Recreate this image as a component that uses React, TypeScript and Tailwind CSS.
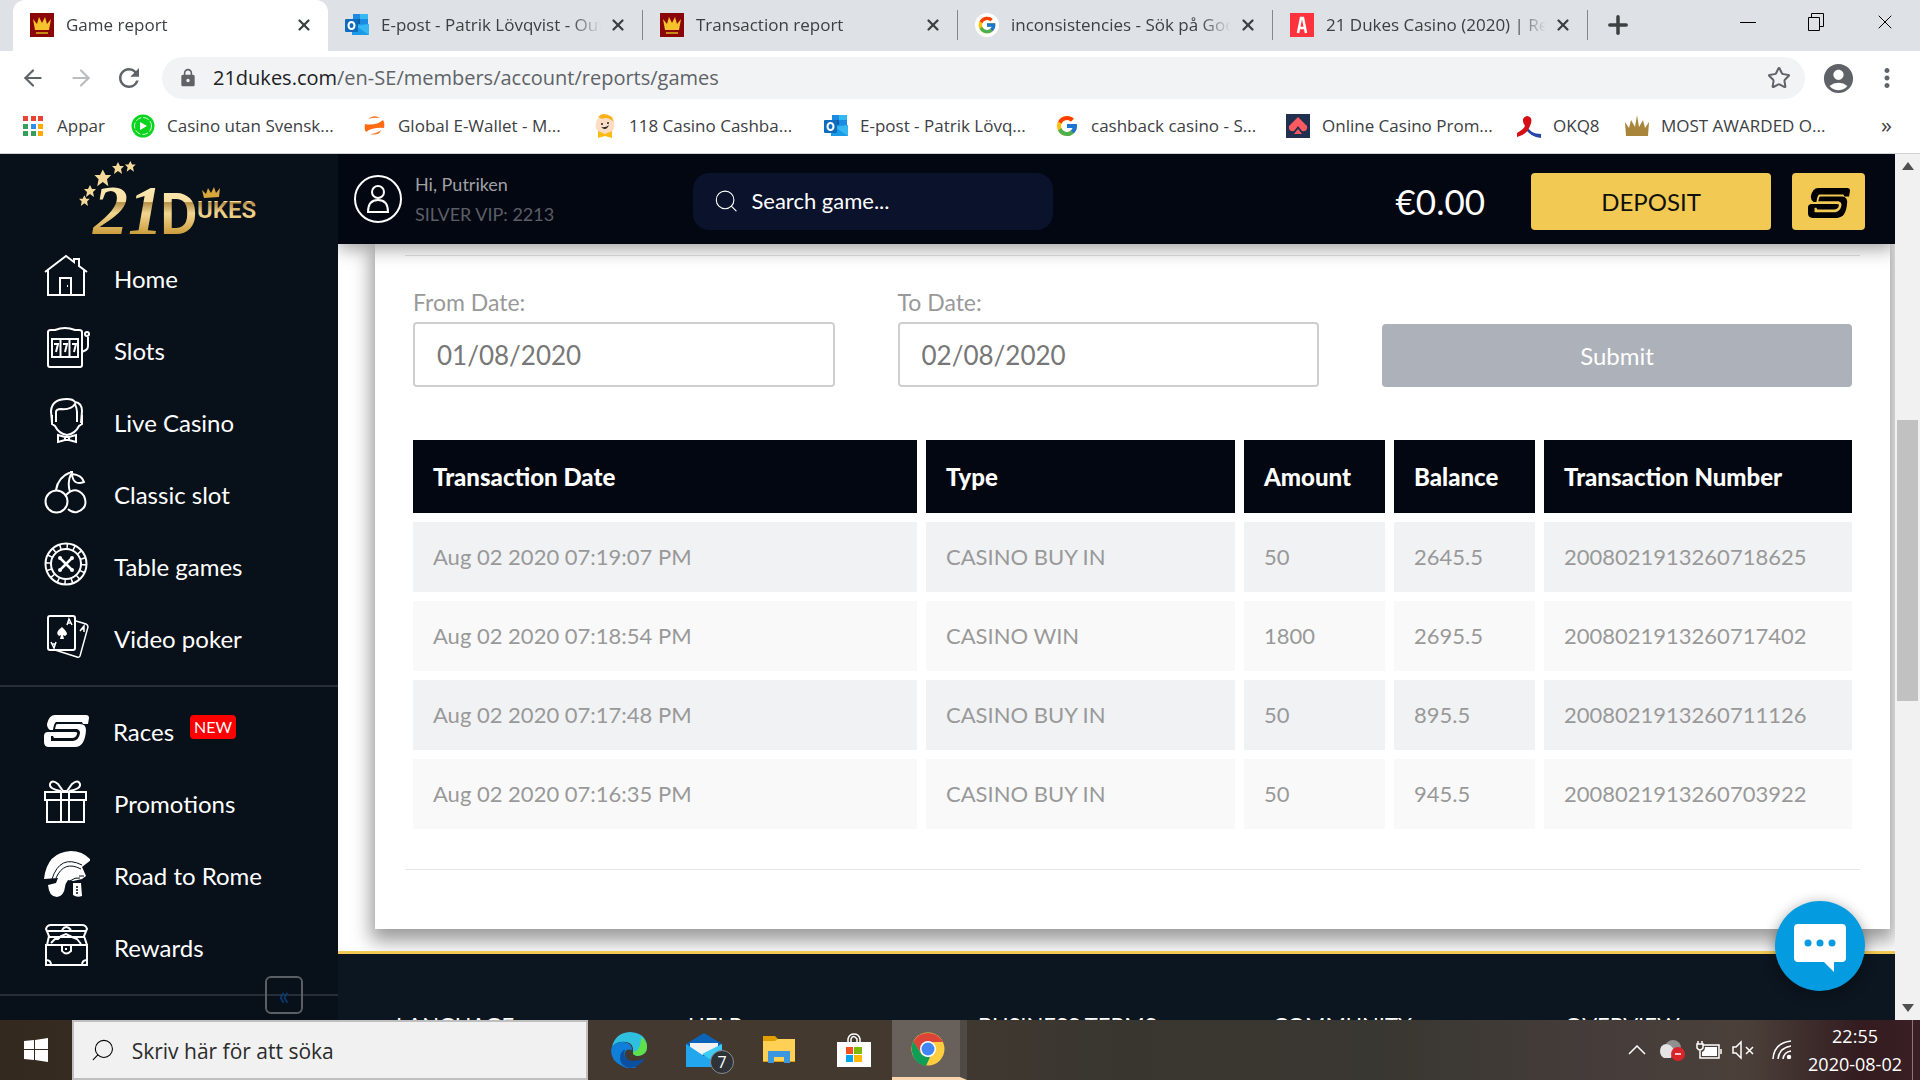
import { useState } from 'react';
import type { ReactNode } from 'react';
import { ArrowLeft, ArrowRight, Star, X, Plus, Search } from 'lucide-react';
import { FcGoogle } from 'react-icons/fc';
import { MdAccountCircle, MdLock, MdRefresh, MdMoreVert } from 'react-icons/md';

const CrownFavicon = () => (
    <svg viewBox="0 0 24 24" className="size-6 shrink-0" aria-hidden="true">
        <rect width="24" height="24" fill="#8b0606" />
        <path d="M3 6l4 5 2-7 3 6 3-6 2 7 4-5-2 11H5z" fill="#f6c32c" />
        <path d="M6 19h12v2H6z" fill="#c98a12" />
    </svg>
);

const OutlookIcon = () => (
    <svg viewBox="0 0 24 24" className="size-6 shrink-0" aria-hidden="true">
        <path d="M8 1h15v10H8z" fill="#1a8be0" />
        <path d="M15 1h8v5h-8z" fill="#35b8f1" />
        <path d="M8 6h7v5H8z" fill="#0a5eb0" />
        <path d="M7 11h17v11H7z" fill="#1a9be8" />
        <path d="M24 11v11L11 13z" fill="#35b8f1" />
        <rect y="6" width="13" height="13" rx="1" fill="#0f6cbd" />
        <ellipse cx="6.500" cy="12.500" rx="3" ry="3.500" fill="none" stroke="#fff" strokeWidth="2" />
    </svg>
);

const GoogleIcon = () => <FcGoogle className="size-6 shrink-0" aria-hidden="true" />;

const GoogleTabIcon = () => (
    <span className="flex size-6 shrink-0 items-center justify-center rounded-full bg-white">
        <FcGoogle className="size-5" aria-hidden="true" />
    </span>
);

const AskIcon = () => (
    <svg viewBox="0 0 24 24" className="size-6 shrink-0" aria-hidden="true">
        <rect width="24" height="24" fill="#ff333d" />
        <path d="M8 20l3-15h2l3 15M9.500 15h5" fill="none" stroke="#fff" strokeWidth="2.500" />
    </svg>
);

const AppsIcon = () => (
    <svg viewBox="0 0 24 24" className="size-6 shrink-0" aria-hidden="true">
        <path d="M2 2h5v5H2zM10 2h5v5h-5zM17 2h5v5h-5z" fill="#ea4335" />
        <path d="M2 10h5v5H2zM2 17h5v5H2zM10 17h5v5h-5z" fill="#34a05a" />
        <path d="M10 10h5v5h-5z" fill="#2f8cf0" />
        <path d="M17 10h5v5h-5zM17 17h5v5h-5z" fill="#f9ab00" />
    </svg>
);

const PlayChipIcon = () => (
    <svg viewBox="0 0 24 24" className="size-6 shrink-0" aria-hidden="true">
        <circle cx="12" cy="12" r="11.500" fill="#0bd41f" />
        <circle cx="12" cy="12" r="8.500" fill="none" stroke="#d9ffdc" strokeDasharray="6 2" />
        <path d="M9 8l7 4-7 4z" fill="#fff" />
    </svg>
);

const WalletIcon = () => (
    <svg viewBox="0 0 24 24" className="size-6 shrink-0" fill="#ff6a13" aria-hidden="true">
        <path d="M6 5Q12 0 18 4 12 3 6 5zM3 10q11 2 18-4 2 3 1 8-11-1-18 4-2-3-1-8zM8 20q6 0 11-4-2 6-11 4z" />
    </svg>
);

const MascotIcon = () => (
    <svg viewBox="0 0 24 24" className="size-6 shrink-0" aria-hidden="true">
        <circle cx="12" cy="11" r="9.500" fill="#fbdcc4" />
        <path d="M5 3Q10-3 19 3l2 5Q14 2 9 5z" fill="#fbb01a" />
        <circle cx="9" cy="10" r="1" fill="#222" />
        <circle cx="15" cy="9" r="1" fill="#222" />
        <path d="M8 13q5 5 8-2-3 3-8 2z" fill="#222" />
        <path d="M5 17l7 3 7-3v7l-7-2-7 2z" fill="#fdbb14" />
    </svg>
);

const SpadeIcon = () => (
    <svg viewBox="0 0 24 24" className="size-6 shrink-0" aria-hidden="true">
        <rect width="24" height="24" fill="#22304f" />
        <path d="M12 3l9 9q1 6-5 5l-4-5-4 5q-6 1-5-5z" fill="#ff5a5f" />
        <path d="M12 15l4 5H8z" fill="#ff5a5f" />
    </svg>
);

const OkIcon = () => (
    <svg viewBox="0 0 24 24" className="size-6 shrink-0" aria-hidden="true">
        <path d="M8 10q5 10 16 10v4Q13 23 8 14z" fill="#2546a8" />
        <path d="M0 19q7-4 8-7-5-8 2-10 7 1 3 10-3 9-13 11z" fill="#d40e14" />
    </svg>
);

const GoldCrownIcon = () => (
    <svg viewBox="0 0 24 24" className="size-6 shrink-0" aria-hidden="true">
        <path d="M0 8l4 6 2-8 4 7 2-12 2 12 4-7 2 8 4-6-1 14H1z" fill="#a8853a" />
    </svg>
);

const RacesMark = ({ className }: { className: string }) => (
    <svg viewBox="0 0 45 32" className={className} fill="currentColor" aria-hidden="true">
        <path d="M11 0H42Q45 0 45 3L44 9H39L38 7H12Q10 8 9 15H6Q3 13 3 9Q5 0 11 0Z" />
        <path d="M12 10Q12 9 14 9H36Q42 9 42 15Q41 32 31 32H5Q0 32 0 27V21Q0 17 4 17H31Q34 17 33 19Q32 23 28 23H10L9 21H7V26H29Q35 25 36 18Q36 15 33 14H11Z" />
    </svg>
);

const tabs = [
    { title: 'Game report', icon: <CrownFavicon /> },
    { title: 'E-post - Patrik Lövqvist - Outlook', icon: <OutlookIcon /> },
    { title: 'Transaction report', icon: <CrownFavicon /> },
    { title: 'inconsistencies - Sök på Google', icon: <GoogleTabIcon /> },
    { title: '21 Dukes Casino (2020) | Review', icon: <AskIcon /> },
];

const bookmarks = [
    { label: 'Appar', icon: <AppsIcon />, width: 'w-[110px]' },
    { label: 'Casino utan Svensk...', icon: <PlayChipIcon />, width: 'w-[231px]' },
    { label: 'Global E-Wallet - M...', icon: <WalletIcon />, width: 'w-[231px]' },
    { label: '118 Casino Cashba...', icon: <MascotIcon />, width: 'w-[231px]' },
    { label: 'E-post - Patrik Lövq...', icon: <OutlookIcon />, width: 'w-[231px]' },
    { label: 'cashback casino - S...', icon: <GoogleIcon />, width: 'w-[231px]' },
    { label: 'Online Casino Prom...', icon: <SpadeIcon />, width: 'w-[231px]' },
    { label: 'OKQ8', icon: <OkIcon />, width: 'w-[108px]' },
    { label: 'MOST AWARDED O...', icon: <GoldCrownIcon />, width: 'w-[231px]' },
];

const BrowserChrome = () => (
    <header className="shrink-0 border-b border-[#d0d2d5] bg-white font-['Open_Sans','Noto_Sans',sans-serif] text-[#3c4043]">
        <div className="flex h-[51px] bg-[#dee1e6] pl-[13px]">
            {tabs.map((tab, i) => (
                <div
                    key={tab.title}
                    className={
                        i === 0
                            ? 'flex w-[315px] items-center rounded-t-xl bg-white pr-3 pb-0.5 pl-[17px]'
                            : 'flex w-[315px] items-center pb-0.5 pl-[17px]'
                    }
                >
                    {tab.icon}
                    <span className="ml-3 w-[220px] overflow-hidden text-[17px] whitespace-nowrap [mask-image:linear-gradient(90deg,#000_86%,transparent)]">
                        {tab.title}
                    </span>
                    <button type="button" aria-label={`Close ${tab.title}`} className="ml-auto flex size-6 items-center justify-center">
                        <X className="size-[18px]" strokeWidth={3} />
                    </button>
                    {i > 0 && <span className="ml-3 h-[30px] w-px bg-[#84878b]" />}
                </div>
            ))}
            <button type="button" aria-label="New tab" className="ml-4 flex items-center pb-0.5">
                <Plus className="size-7" strokeWidth={3} />
            </button>
            <div className="ml-auto flex h-[44px] text-black">
                <button type="button" aria-label="Minimize" className="flex w-[68px] items-center justify-center">
                    <span className="h-px w-4 bg-black" />
                </button>
                <button type="button" aria-label="Restore" className="flex w-[68px] items-center justify-center">
                    <svg viewBox="0 0 16 18" className="h-[18px] w-4" fill="none" stroke="currentColor">
                        <path d="M.5 4.500h11v13H.5zM3.500 4.500v-4h12v13h-4" />
                    </svg>
                </button>
                <button type="button" aria-label="Close" className="flex w-[70px] items-center justify-center">
                    <X className="size-6" strokeWidth={1} />
                </button>
            </div>
        </div>

        <div className="flex h-[54px] items-center pr-[18px] pl-5 text-[#5f6368]">
            <button type="button" aria-label="Back">
                <ArrowLeft className="size-[26px]" strokeWidth={2} />
            </button>
            <button type="button" aria-label="Forward" className="ml-[22px] text-[#babcbe]">
                <ArrowRight className="size-[26px]" strokeWidth={2} />
            </button>
            <button type="button" aria-label="Reload" className="ml-5">
                <MdRefresh className="size-[30px]" />
            </button>
            <div className="ml-[18px] flex h-[42px] flex-1 items-center rounded-full bg-[#f1f3f4] pr-[14px] pl-4">
                <MdLock className="size-5" />
                <div role="textbox" aria-label="Address" className="ml-[15px] flex-1 text-[20px]">
                    <span className="text-[#202124]">21dukes.com</span>/en-SE/members/account/reports/games
                </div>
                <button type="button" aria-label="Bookmark this page">
                    <Star className="size-6" strokeWidth={2} />
                </button>
            </div>
            <button type="button" aria-label="Profile" className="ml-4">
                <MdAccountCircle className="size-[35px]" />
            </button>
            <button type="button" aria-label="Menu" className="ml-4">
                <MdMoreVert className="size-[30px]" />
            </button>
        </div>

        <nav className="flex h-12 items-center pb-1.5 pl-[21px]">
            {bookmarks.map((bookmark) => (
                <a key={bookmark.label} href="#" className={`flex shrink-0 items-center gap-3 text-[17px] whitespace-nowrap ${bookmark.width}`}>
                    {bookmark.icon}
                    {bookmark.label}
                </a>
            ))}
            <button type="button" aria-label="More bookmarks" className="mr-7 ml-auto pb-1 text-[22px]">
                »
            </button>
        </nav>
    </header>
);

const Logo = () => (
    <svg viewBox="0 0 180 76" className="h-[76px] w-[180px]" role="img" aria-label="21 Dukes">
        <defs>
            <linearGradient id="gold" x1="0" y1="20" x2="0" y2="74" gradientUnits="userSpaceOnUse">
                <stop offset="0" stopColor="#ffedbd" />
                <stop offset=".38" stopColor="#f9dfa0" />
                <stop offset=".4" stopColor="#b48f47" />
                <stop offset=".6" stopColor="#f2d690" />
                <stop offset="1" stopColor="#c99a38" />
            </linearGradient>
            <path id="star" d="M0-6l2 4 4 0-3 3 1 5-4-3-4 3 1-5-3-3 4 0z" fill="#f5d999" />
        </defs>
        <use href="#star" x="6" y="44" transform="scale(.9)" />
        <use href="#star" x="11" y="30" />
        <use href="#star" x="17" y="12" transform="scale(1.4)" />
        <use href="#star" x="39" y="7" />
        <use href="#star" x="57" y="6" transform="scale(.9)" />
        <text x="14" y="73" fontSize="70" fill="url(#gold)" className="font-['Liberation_Serif',serif] font-bold italic">
            21
        </text>
        <g fill="url(#gold)" className="font-['Roboto',sans-serif] font-semibold">
            <text x="81" y="73" fontSize="58">D</text>
            <text x="118" y="57" fontSize="24">UKES</text>
        </g>
        <path d="M125 37l-2-8 4 4 2-6 3 5 3-6 2 6 4-5-1 9z" fill="#d9a83c" />
    </svg>
);

const icons: Record<string, ReactNode> = {
    Home: (
        <>
            <path d="M1 18L22 2l8 6V5h5v7l8 6M4 16v25h36V16" />
            <path d="M16 41V24h11v17M23 32h1" />
        </>
    ),
    Slots: (
        <>
            <path d="M4 6q0-2 3-2h4q10-4 20 0h4q3 0 3 2v33q0 2-2 2H6q-2 0-2-2zM8 13h26v18H8zM16.500 13v18M25.500 13v18M38 20v6l4-2q2-1 2-4v-9" />
            <path d="M10 18h4l-2 8M19 18h4l-2 8M28 18h4l-2 8" />
            <circle cx="43" cy="8" r="2" />
        </>
    ),
    'Live Casino': (
        <>
            <path d="M8 25L7 13Q8 1 23 1q6 0 8 3 7 1 7 9l-1 12M12 24V14q0-3 5-3 10 1 14-5 2 5 2 8v10M8 17v9l3 2q4 8 12 9 8-1 12-9l3-2v-9" />
            <path d="M14 37l7 2h4l7-2v7l-7-2h-4l-7 2zM21 39v3M25 39v3" />
        </>
    ),
    'Classic slot': (
        <>
            <circle cx="12.500" cy="31.500" r="11" />
            <path d="M22 25q10-10 18 1 5 12-7 16-5 1-9-3M12 20Q14 7 27 2M26 22Q23 12 27 4M28 4q10 1 12 8-11 4-12-8zM26 2h3" />
        </>
    ),
    'Table games': (
        <>
            <circle cx="22" cy="22" r="20.500" />
            <circle cx="22" cy="22" r="15" />
            <circle cx="22" cy="22" r="17.500" strokeWidth="5" strokeDasharray="1.500 5.370" />
            <path d="M16 16l12 12M28 16L16 28" strokeWidth="2.500" />
            <g fill="currentColor" stroke="none">
                <circle cx="16" cy="16" r="2" />
                <circle cx="28" cy="16" r="2" />
                <circle cx="16" cy="28" r="2" />
                <circle cx="28" cy="28" r="2" />
            </g>
        </>
    ),
    'Video poker': (
        <>
            <rect x="4" y="2" width="27" height="34" rx="2" />
            <path d="M32 7l10 3q2 1 2 3l-8 29q-1 2-3 1L11 36M23 11l2-6 3 6M24 9h3M7 28l3 6 2-6M8 30h3M36 17l4-5v6M37 15h3" strokeWidth="1.500" />
            <path d="M18 13q8 7 3 9l-2-1 1 4h-4l1-4-2 1q-5-3 3-9z" fill="currentColor" stroke="none" />
        </>
    ),
    Promotions: (
        <path d="M1 13h41v8H1zM3 21v22h37V21M17 13v30M25 13v30M17 12Q5 10 6 5q2-5 8 0l5 7h4l5-7q6-5 8 0 1 5-11 7" />
    ),
    'Road to Rome': (
        <>
            <g fill="currentColor" stroke="none">
                <path d="M0 28Q3 1 27 0q12 0 20 9l-9 7q1 2 4 9l-4 3-9 2-5-1q-3 4-3 7-1 9-8 10Q5 46 4 34l8-2 2-5z" />
                <path d="M29 32h8l1 13q-5 2-9-1z" />
            </g>
            <g stroke="#08101a" strokeWidth="1">
                <path d="M8 28Q16 3 38 14M12 27Q20 9 37 18M26 30q5-4 10-3M35 25h5" />
                <path d="M33 35v8" strokeWidth="1.500" strokeDasharray="2 1" />
            </g>
        </>
    ),
    Rewards: (
        <>
            <path d="M2 22h41v20H2zM3 22L5 13 2 6q1-4 5-4h31q4 0 5 4l-3 7 3 9M3 8h39M5 14h35M18 7q4-6 9 0M7 20l4-4h3l3-3 5-2 6 3 5 2 4 5" />
            <path d="M18 22v6q4 5 9 0v-6M22 25v2M2 37q5 0 5 5M43 37q-5 0-5 5" />
        </>
    ),
};

const gameLinks = ['Home', 'Slots', 'Live Casino', 'Classic slot', 'Table games', 'Video poker'];
const clubLinks = ['Races', 'Promotions', 'Road to Rome', 'Rewards'];

const SidebarLink = ({ label }: { label: string }) => (
    <a href="#" className="flex h-[72px] items-center gap-6 pl-11 text-[24px] text-white">
        {label === 'Races' ? (
            <RacesMark className="mt-1 h-8 w-[45px]" />
        ) : (
            <svg viewBox="0 0 46 46" className="mt-0.5 size-[46px]" fill="none" stroke="currentColor" strokeWidth="2" aria-hidden="true">
                {icons[label]}
            </svg>
        )}
        <span className="pt-1.5">{label}</span>
        {label === 'Races' && (
            <span className="mb-1 -ml-2 rounded-sm bg-[#ff0000] px-1 text-[16px] leading-6">NEW</span>
        )}
    </a>
);

const Sidebar = () => (
    <aside className="flex w-[338px] shrink-0 flex-col bg-[#08101a]">
        <a href="#" className="flex h-[86px] pt-[7px] pl-[79px]">
            <Logo />
        </a>
        <nav className="h-[445px]">
            {gameLinks.map((label) => (
                <SidebarLink key={label} label={label} />
            ))}
        </nav>
        <nav className="border-y-2 border-[#272e37] pt-1.5 pb-[13px]">
            {clubLinks.map((label) => (
                <SidebarLink key={label} label={label} />
            ))}
        </nav>
        <button
            type="button"
            aria-label="Collapse menu"
            className="relative -mt-5 mr-[35px] size-[38px] self-end rounded-md border-2 border-[#5b6066] text-[26px] leading-8 text-[#0b3a6e]"
        >
            «
        </button>
    </aside>
);

const SiteHeader = () => (
    <div className="relative z-10 flex h-[90px] shrink-0 items-center bg-[#030711] pt-1 pr-[30px] pl-4 text-white shadow-[0_4px_18px_rgba(0,0,0,0.4)]">
        <svg viewBox="0 0 48 48" className="mb-1 size-12" fill="none" stroke="#fff" strokeWidth="2" aria-hidden="true">
            <circle cx="24" cy="24" r="23" />
            <circle cx="24" cy="17" r="6" />
            <path d="M14 37q0-12 10-12t10 12z" />
        </svg>
        <div className="mb-1 ml-[13px] w-[278px] text-[18px] leading-[30px]">
            <p className="text-[#a0a1a5]">Hi, Putriken</p>
            <p className="text-[#5b5e66]">SILVER VIP: 2213</p>
        </div>
        <label className="flex h-[57px] w-[360px] items-center gap-3 rounded-2xl bg-[#0a122c] px-5">
            <Search className="size-[30px]" strokeWidth={1} />
            <input
                type="search"
                aria-label="Search game"
                placeholder="Search game..."
                className="w-full pb-0.5 text-[22px] outline-none placeholder:text-white"
            />
        </label>
        <span className="mr-[46px] ml-auto text-[35px]">€0.00</span>
        <button type="button" className="h-[57px] w-[240px] rounded-sm bg-[#f1c953] pt-0.5 text-[24px] text-[#10100c]">
            DEPOSIT
        </button>
        <button type="button" aria-label="Races" className="ml-[21px] flex h-[57px] w-[73px] items-center justify-center rounded-sm bg-[#f1c953] pt-1 text-black">
            <RacesMark className="h-[30px] w-[42px]" />
        </button>
    </div>
);

const transactions = [
    ['Aug 02 2020 07:19:07 PM', 'CASINO BUY IN', '50', '2645.5', '2008021913260718625'],
    ['Aug 02 2020 07:18:54 PM', 'CASINO WIN', '1800', '2695.5', '2008021913260717402'],
    ['Aug 02 2020 07:17:48 PM', 'CASINO BUY IN', '50', '895.5', '2008021913260711126'],
    ['Aug 02 2020 07:16:35 PM', 'CASINO BUY IN', '50', '945.5', '2008021913260703922'],
];

const GameReport = () => {
    const [fromDate, setFromDate] = useState('01/08/2020');
    const [toDate, setToDate] = useState('02/08/2020');

    return (
        <section className="mr-[5px] ml-[37px] bg-white px-[30px] pt-[11px] pb-[59px] text-[#999999] shadow-[0_8px_18px_4px_rgba(0,0,0,0.4)]">
            <hr className="border-[#e0e0e0]" />
            <form className="mt-[31px] grid grid-cols-[1fr_1fr_470px] items-end gap-[63px] px-2" onSubmit={(e) => e.preventDefault()}>
                <div>
                    <label htmlFor="from" className="block text-[23px] leading-[30px]">
                        From Date:
                    </label>
                    <input
                        id="from"
                        value={fromDate}
                        onChange={(e) => setFromDate(e.target.value)}
                        className="mt-[5px] h-[65px] w-full rounded-sm border-2 border-[#cfcfcf] px-[22px] text-[26px] text-[#777777]"
                    />
                </div>
                <div>
                    <label htmlFor="to" className="block text-[23px] leading-[30px]">
                        To Date:
                    </label>
                    <input
                        id="to"
                        value={toDate}
                        onChange={(e) => setToDate(e.target.value)}
                        className="mt-[5px] h-[65px] w-full rounded-sm border-2 border-[#cfcfcf] px-[22px] text-[26px] text-[#777777]"
                    />
                </div>
                <button type="submit" className="h-[63px] rounded-sm bg-[#adb1b9] text-[24px] text-white">
                    Submit
                </button>
            </form>

            <div className="-mx-px mt-11">
                <table className="w-full table-fixed border-separate border-spacing-[9px] text-left">
                    <colgroup>
                        <col />
                        <col className="w-[309px]" />
                        <col className="w-[141px]" />
                        <col className="w-[141px]" />
                        <col className="w-[308px]" />
                    </colgroup>
                    <thead>
                        <tr className="h-[73px] text-[24px] text-white">
                            {['Transaction Date', 'Type', 'Amount', 'Balance', 'Transaction Number'].map((heading) => (
                                <th key={heading} className="bg-[#030711] px-5 font-black whitespace-nowrap">
                                    {heading}
                                </th>
                            ))}
                        </tr>
                    </thead>
                    <tbody>
                        {transactions.map((row) => (
                            <tr key={row[0]} className="h-[70px] bg-[#f9f9f9] text-[22px] odd:bg-[#f1f2f4]">
                                {row.map((cell, i) => (
                                    <td key={i} className="px-5 pb-0.5 whitespace-nowrap">
                                        {cell}
                                    </td>
                                ))}
                            </tr>
                        ))}
                    </tbody>
                </table>
            </div>
            <hr className="mt-[31px] border-[#e6e6e6]" />
        </section>
    );
};

const SiteFooter = () => (
    <footer className="mt-[22px] border-t-[3px] border-[#f1c953] bg-[#0c1620] pt-[59px] pb-10 pl-[58px] text-[22px] leading-6 text-white">
        <div className="flex">
            <h2 className="w-[292px]">LANGUAGE</h2>
            <h2 className="w-[290px]">HELP</h2>
            <h2 className="w-[295px]">BUSINESS TERMS</h2>
            <h2 className="w-[292px]">COMMUNITY</h2>
            <h2>OVERVIEW</h2>
        </div>
    </footer>
);

const ScrollBar = () => (
    <div className="flex w-[25px] shrink-0 flex-col items-center justify-between bg-[#f1f1f1] text-[#505050]">
        <svg viewBox="0 0 12 8" className="mt-2 h-2 w-3" aria-hidden="true">
            <path d="M6 0l6 8H0z" fill="currentColor" />
        </svg>
        <span className="mt-24 mb-[150px] h-[281px] w-[21px] bg-[#c1c1c1]" />
        <svg viewBox="0 0 12 8" className="mb-2 h-2 w-3" aria-hidden="true">
            <path d="M0 0h12L6 8z" fill="currentColor" />
        </svg>
    </div>
);

const Taskbar = () => (
    <footer className="flex h-[60px] shrink-0 items-stretch bg-[linear-gradient(90deg,#33291f_0%,#433930_31%,#43392f_46%,#393630_58%,#393731_72%,#463d3b_84%,#4b4039_91%,#331b20_97%,#3a2024_100%)] font-['Open_Sans','Noto_Sans',sans-serif] text-white">
        <button type="button" aria-label="Start" className="flex w-[72px] items-center justify-center">
            <svg viewBox="0 0 24 24" className="size-6" fill="#fff">
                <path d="M0 3l10-1v9H0zM11 2l13-2v11H11zM0 12h10v10L0 21zM11 12h13v12l-13-2z" />
            </svg>
        </button>
        <label className="flex w-[516px] items-center gap-4 border-2 border-[#bfbfbf] bg-[#f1f1f1] pl-4 text-black">
            <Search className="size-7 -scale-x-100" strokeWidth={1} />
            <input
                aria-label="Sök"
                placeholder="Skriv här för att söka"
                className="w-full pt-1 text-[21px] outline-none placeholder:text-[#2b2b2b]"
            />
        </label>
        <button type="button" aria-label="Edge" className="ml-[3px] flex w-[75px] items-center justify-center">
            <svg viewBox="0 0 36 36" className="size-9">
                <path d="M1 15Q4 1 19 0q16 1 17 14 0 9-9 10-6-1-5-4 1-9-7-10Q6 9 1 15z" fill="#2fc0e0" />
                <path d="M30 5q6 4 6 10 0 8-9 9-6-1-5-4 8-1 8-15z" fill="#5fe04a" />
                <path d="M0 18Q2 9 13 10q8 1 8 8-8-2-7 6 3 9 12 11-8 3-15-1Q0 29 0 18z" fill="#0f7fd9" />
                <path d="M14 17q-3 12 9 12 6 0 11-3-5 9-15 10-10-2-10-10 0-6 5-9z" fill="#0c4fa0" />
            </svg>
        </button>
        <button type="button" aria-label="Mail" className="relative flex w-[75px] items-center justify-center">
            <svg viewBox="0 0 36 34" className="h-[34px] w-9">
                <path d="M0 11L18 0l18 11v10H0z" fill="#0a64b8" />
                <path d="M4 10h28v12H4z" fill="#f3f3f3" />
                <path d="M0 11l18 12 18-12v23H0z" fill="#22a7ee" />
                <path d="M36 11v23L16 21z" fill="#3ccbf5" />
            </svg>
            <span className="absolute right-[7px] bottom-1.5 flex size-6 items-center justify-center rounded-full border border-[#8b8b8b] bg-[#2f3237] text-[16px]">
                7
            </span>
        </button>
        <button type="button" aria-label="File Explorer" className="flex w-[75px] items-center justify-center">
            <svg viewBox="0 0 32 28" className="h-7 w-8">
                <path d="M0 0h12l3 3h17v23H0z" fill="#e0a000" />
                <path d="M0 5h12l3-2h17v22H0z" fill="#ffd056" />
                <path d="M5 15h22v12h-6v-6H11v6H5z" fill="#3a97e0" />
            </svg>
        </button>
        <button type="button" aria-label="Store" className="flex w-[75px] items-center justify-center">
            <svg viewBox="0 0 34 34" className="size-[34px]">
                <path d="M11 10V6q1-5 6-5t6 5v4M14 10V6q2-5 6 0v4" fill="none" stroke="#fff" strokeWidth="1.500" />
                <path d="M0 9h34v25H0z" fill="#fff" />
                <path d="M9 14h7v7H9z" fill="#f25022" />
                <path d="M17 14h8v7h-8z" fill="#7fba00" />
                <path d="M9 22h7v7H9z" fill="#00a4ef" />
                <path d="M17 22h8v7h-8z" fill="#ffb900" />
            </svg>
        </button>
        <button type="button" aria-label="Chrome" className="ml-px flex w-[75px] items-center justify-center border-r-[7px] border-b-[3px] border-r-[#4f4a44] border-b-[#fbd5ae] bg-[#68615b] pl-1">
            <svg viewBox="0 0 34 34" className="size-[34px]">
                <circle cx="17" cy="17" r="16.500" fill="#ffcd40" />
                <path d="M2 10Q7 1 17 1t15 9H17l-7 11z" fill="#db4437" />
                <path d="M2 9l9 14 8 2-4 9Q3 32 1 20-0 14 2 9z" fill="#0f9d58" />
                <circle cx="17" cy="17" r="8" fill="#fff" />
                <circle cx="17" cy="17" r="6.500" fill="#4285f4" />
            </svg>
        </button>
        <div className="ml-auto flex items-center pr-[7px]">
            <svg viewBox="0 0 18 10" className="h-2.5 w-[18px]" fill="none" stroke="#fff" strokeWidth="1.500" aria-hidden="true">
                <path d="M1 9l8-8 8 8" />
            </svg>
            <svg viewBox="0 0 26 22" className="ml-[14px] h-[22px] w-[26px]" aria-hidden="true">
                <circle cx="13" cy="9" r="8" fill="#909090" />
                <path d="M0 12q0-6 6-7 5 0 8 6l-3 8H4q-4-2-4-7z" fill="#e4e4e4" />
                <circle cx="18" cy="15" r="7" fill="#d9252a" />
                <path d="M15 15h6" stroke="#fff" strokeWidth="1.500" />
            </svg>
            <svg viewBox="0 0 26 18" className="ml-[10px] h-[18px] w-[26px]" fill="none" stroke="#fff" strokeWidth="1.500" aria-hidden="true">
                <path d="M7 4h16v13H4V9M25 8v5M1 3h6v4q-3 4-6 0zM2 0v3M6 0v3" />
                <path d="M9 6h12v9H6v-4q3-1 3-5z" fill="#fff" stroke="none" />
            </svg>
            <svg viewBox="0 0 24 20" className="ml-[10px] h-5 w-6" fill="none" stroke="#fff" strokeWidth="1.500" aria-hidden="true">
                <path d="M1 7v6h3l5 5V2L4 7zM14 7l7 7M21 7l-7 7" />
            </svg>
            <svg viewBox="0 0 20 20" className="ml-4 size-5" fill="none" stroke="#fff" strokeWidth="1.500" aria-hidden="true">
                <path d="M1 19Q2 3 19 1M6 19Q7 8 19 6M11 19q1-7 8-8" />
                <circle cx="17" cy="17" r="1.500" fill="#fff" />
            </svg>
            <div className="mr-[10px] ml-4 text-center text-[18px] leading-7">
                <p>22:55</p>
                <p>2020-08-02</p>
            </div>
            <span className="h-[60px] w-px bg-[#8a7577]" />
        </div>
    </footer>
);

const App = () => (
    <div className="flex h-screen flex-col overflow-hidden bg-white">
        <BrowserChrome />
        <div className="relative flex min-h-0 flex-1 overflow-hidden font-['Lato','Liberation_Sans',sans-serif]">
            <Sidebar />
            <main className="flex min-w-0 flex-1 flex-col overflow-hidden">
                <SiteHeader />
                <GameReport />
                <SiteFooter />
            </main>
            <ScrollBar />
            <button
                type="button"
                aria-label="Open chat"
                className="absolute right-[55px] bottom-[29px] z-20 flex size-[90px] items-center justify-center rounded-full bg-[#049be0] shadow-[0_3px_14px_rgba(0,0,0,0.4)]"
            >
                <svg viewBox="0 0 52 48" className="mt-1 h-12 w-[52px]">
                    <path d="M4 0h44q4 0 4 4v30q0 4-4 4h-8v10L30 38H4q-4 0-4-4V4q0-4 4-4z" fill="#fff" />
                    <g fill="#049be0">
                        <circle cx="14" cy="19" r="3.500" />
                        <circle cx="26" cy="19" r="3.500" />
                        <circle cx="38" cy="19" r="3.500" />
                    </g>
                </svg>
            </button>
        </div>
        <Taskbar />
    </div>
);

export default App;
